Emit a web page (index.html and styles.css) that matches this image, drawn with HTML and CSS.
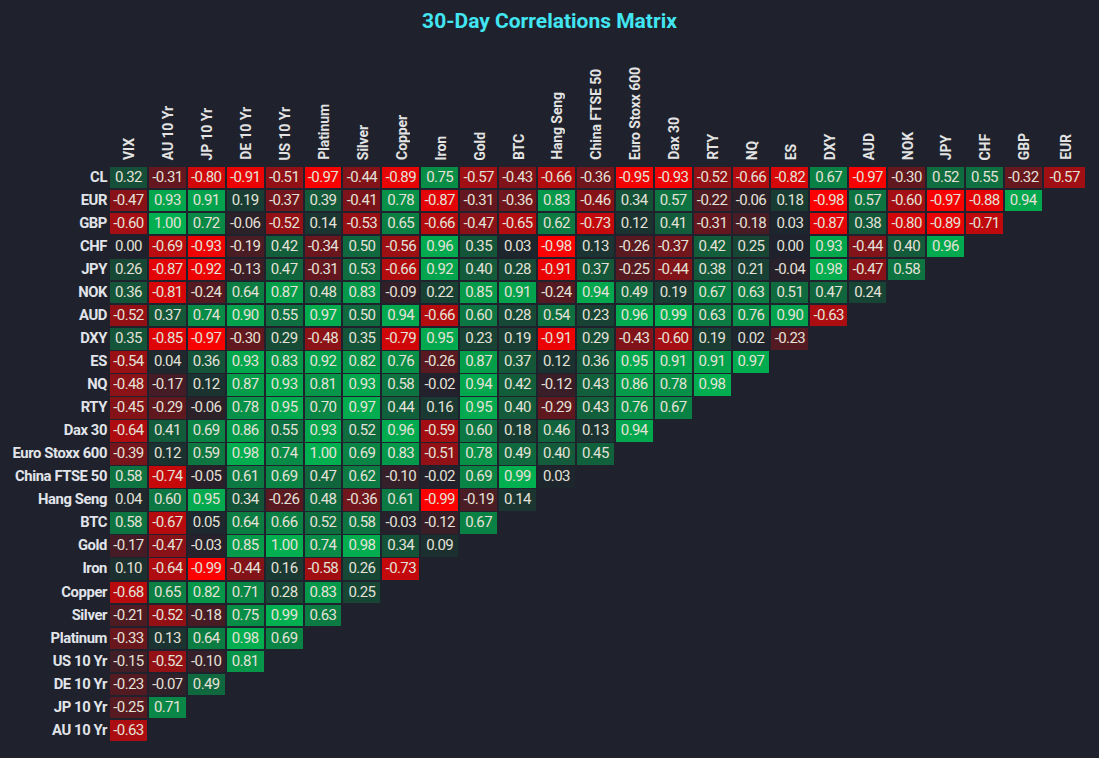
FILE: index.html
```html
<!DOCTYPE html>
<html lang="en">
<head>
<meta charset="utf-8">
<title>30-Day Correlations Matrix</title>
<link rel="stylesheet" href="styles.css">
</head>
<body>
<main class="page">
  <h1 class="title">30-Day Correlations Matrix</h1>
  <div class="matrix" id="matrix"></div>
</main>
<script src="script.js"></script>
</body>
</html>
```

FILE: styles.css
```css
html, body {
  margin: 0;
  padding: 0;
  background: #1f222c;
}

.page {
  width: 1099px;
  height: 758px;
  overflow: hidden;
  font-family: Roboto, "Liberation Sans", sans-serif;
}

.title {
  margin: 0;
  padding-top: 9px;
  height: 24px;
  line-height: 24px;
  text-align: center;
  font-size: 21px;
  font-weight: 700;
  color: #42e6f2;
  letter-spacing: 0;
}

.matrix {
  display: flex;
  flex-direction: column;
  gap: 1.55px;
}

.row {
  display: flex;
  column-gap: 2px;
  height: 21.5px;
}

.row-head {
  height: 132.15px;
}

.label {
  flex: 0 0 107px;
  width: 107px;
  margin-right: 1px;
  text-align: right;
  line-height: 21.5px;
  font-weight: 700;
  font-size: 14.8px;
  letter-spacing: -0.4px;
  color: #e1e4ea;
  white-space: nowrap;
}

.col {
  flex: 0 0 36.91px;
  width: 36.91px;
  display: flex;
  justify-content: center;
  align-items: flex-end;
  padding-bottom: 5px;
  box-sizing: border-box;
}

.col-text {
  writing-mode: vertical-rl;
  transform: rotate(180deg);
  font-weight: 700;
  font-size: 14px;
  letter-spacing: -0.1px;
  color: #e3e3e3;
  white-space: nowrap;
  margin-left: 2px;
}

.cell {
  flex: 0 0 36.91px;
  width: 36.91px;
  height: 21.5px;
  line-height: 21.5px;
  text-align: center;
  font-size: 15px;
  letter-spacing: -0.6px;
  color: #e4e1d8;
}

.col.last,
.cell.last {
  flex-basis: 41.7px;
  width: 41.7px;
}
```

FILE: script.js
```js
(function () {
  var cols = ["VIX", "AU 10 Yr", "JP 10 Yr", "DE 10 Yr", "US 10 Yr", "Platinum", "Silver", "Copper", "Iron", "Gold", "BTC", "Hang Seng", "China FTSE 50", "Euro Stoxx 600", "Dax 30", "RTY", "NQ", "ES", "DXY", "AUD", "NOK", "JPY", "CHF", "GBP", "EUR"];
  var rows = [
    ["CL", "0.32 -0.31 -0.80 -0.91 -0.51 -0.97 -0.44 -0.89 0.75 -0.57 -0.43 -0.66 -0.36 -0.95 -0.93 -0.52 -0.66 -0.82 0.67 -0.97 -0.30 0.52 0.55 -0.32 -0.57"],
    ["EUR", "-0.47 0.93 0.91 0.19 -0.37 0.39 -0.41 0.78 -0.87 -0.31 -0.36 0.83 -0.46 0.34 0.57 -0.22 -0.06 0.18 -0.98 0.57 -0.60 -0.97 -0.88 0.94"],
    ["GBP", "-0.60 1.00 0.72 -0.06 -0.52 0.14 -0.53 0.65 -0.66 -0.47 -0.65 0.62 -0.73 0.12 0.41 -0.31 -0.18 0.03 -0.87 0.38 -0.80 -0.89 -0.71"],
    ["CHF", "0.00 -0.69 -0.93 -0.19 0.42 -0.34 0.50 -0.56 0.96 0.35 0.03 -0.98 0.13 -0.26 -0.37 0.42 0.25 0.00 0.93 -0.44 0.40 0.96"],
    ["JPY", "0.26 -0.87 -0.92 -0.13 0.47 -0.31 0.53 -0.66 0.92 0.40 0.28 -0.91 0.37 -0.25 -0.44 0.38 0.21 -0.04 0.98 -0.47 0.58"],
    ["NOK", "0.36 -0.81 -0.24 0.64 0.87 0.48 0.83 -0.09 0.22 0.85 0.91 -0.24 0.94 0.49 0.19 0.67 0.63 0.51 0.47 0.24"],
    ["AUD", "-0.52 0.37 0.74 0.90 0.55 0.97 0.50 0.94 -0.66 0.60 0.28 0.54 0.23 0.96 0.99 0.63 0.76 0.90 -0.63"],
    ["DXY", "0.35 -0.85 -0.97 -0.30 0.29 -0.48 0.35 -0.79 0.95 0.23 0.19 -0.91 0.29 -0.43 -0.60 0.19 0.02 -0.23"],
    ["ES", "-0.54 0.04 0.36 0.93 0.83 0.92 0.82 0.76 -0.26 0.87 0.37 0.12 0.36 0.95 0.91 0.91 0.97"],
    ["NQ", "-0.48 -0.17 0.12 0.87 0.93 0.81 0.93 0.58 -0.02 0.94 0.42 -0.12 0.43 0.86 0.78 0.98"],
    ["RTY", "-0.45 -0.29 -0.06 0.78 0.95 0.70 0.97 0.44 0.16 0.95 0.40 -0.29 0.43 0.76 0.67"],
    ["Dax 30", "-0.64 0.41 0.69 0.86 0.55 0.93 0.52 0.96 -0.59 0.60 0.18 0.46 0.13 0.94"],
    ["Euro Stoxx 600", "-0.39 0.12 0.59 0.98 0.74 1.00 0.69 0.83 -0.51 0.78 0.49 0.40 0.45"],
    ["China FTSE 50", "0.58 -0.74 -0.05 0.61 0.69 0.47 0.62 -0.10 -0.02 0.69 0.99 0.03"],
    ["Hang Seng", "0.04 0.60 0.95 0.34 -0.26 0.48 -0.36 0.61 -0.99 -0.19 0.14"],
    ["BTC", "0.58 -0.67 0.05 0.64 0.66 0.52 0.58 -0.03 -0.12 0.67"],
    ["Gold", "-0.17 -0.47 -0.03 0.85 1.00 0.74 0.98 0.34 0.09"],
    ["Iron", "0.10 -0.64 -0.99 -0.44 0.16 -0.58 0.26 -0.73"],
    ["Copper", "-0.68 0.65 0.82 0.71 0.28 0.83 0.25"],
    ["Silver", "-0.21 -0.52 -0.18 0.75 0.99 0.63"],
    ["Platinum", "-0.33 0.13 0.64 0.98 0.69"],
    ["US 10 Yr", "-0.15 -0.52 -0.10 0.81"],
    ["DE 10 Yr", "-0.23 -0.07 0.49"],
    ["JP 10 Yr", "-0.25 0.71"],
    ["AU 10 Yr", "-0.63"]
  ];

  var base = [31, 34, 44];
  var pos = [0, 176, 80];
  var neg = [255, 0, 0];

  function colour(v) {
    var t = Math.min(1, Math.abs(v));
    var end = v >= 0 ? pos : neg;
    var c = base.map(function (b, i) { return Math.round(b + (end[i] - b) * t); });
    return "rgb(" + c.join(",") + ")";
  }

  var matrix = document.getElementById("matrix");

  var head = document.createElement("div");
  head.className = "row row-head";
  var corner = document.createElement("div");
  corner.className = "label";
  head.appendChild(corner);
  cols.forEach(function (name, i) {
    var c = document.createElement("div");
    c.className = "col" + (i === cols.length - 1 ? " last" : "");
    var s = document.createElement("span");
    s.className = "col-text";
    s.textContent = name;
    c.appendChild(s);
    head.appendChild(c);
  });
  matrix.appendChild(head);

  rows.forEach(function (r) {
    var row = document.createElement("div");
    row.className = "row";
    var l = document.createElement("div");
    l.className = "label";
    l.textContent = r[0];
    row.appendChild(l);
    r[1].split(" ").forEach(function (val, i) {
      var d = document.createElement("div");
      d.className = "cell" + (i === cols.length - 1 ? " last" : "");
      d.textContent = val;
      d.style.background = colour(parseFloat(val));
      row.appendChild(d);
    });
    matrix.appendChild(row);
  });
})();
```
